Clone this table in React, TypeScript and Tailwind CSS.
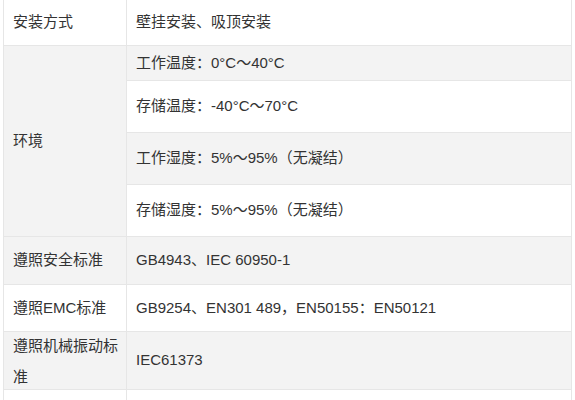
import React from "react";

const font = { fontFamily: '"Liberation Sans", "Noto Sans CJK SC", sans-serif' };

function Row({ label, value, h, bg, labelClass = "" }: { label: React.ReactNode; value: React.ReactNode; h: string; bg: string; labelClass?: string }) {
  return (
    <div className={`flex border-b border-[#e6e6e6] ${h} ${bg}`}>
      <div className={`w-[123px] shrink-0 border-r border-[#e6e6e6] pl-[9px] pr-1 flex items-center ${labelClass}`}>{label}</div>
      <div className="flex-1 pl-[9px] flex items-center">{value}</div>
    </div>
  );
}

export default function App() {
  return (
    <div className="w-[575px] h-[400px] overflow-hidden bg-white" style={font}>
      <div className="ml-[3px] w-[569px] -mt-[1px] border-l border-r border-t border-[#e6e6e6] text-[15px] text-[#333]">
        <Row label="安装方式" value="壁挂安装、吸顶安装" h="h-[46px]" bg="bg-white" />
        <div className="flex border-b border-[#e6e6e6]">
          <div className="w-[123px] shrink-0 border-r border-[#e6e6e6] pl-[9px] flex items-center bg-[#f3f3f3]">环境</div>
          <div className="flex-1 flex flex-col">
            <div className="h-[35px] pl-[9px] flex items-center bg-[#f3f3f3] border-b border-[#e6e6e6]">工作温度：0°C～40°C</div>
            <div className="h-[52px] pl-[9px] flex items-center bg-white border-b border-[#e6e6e6]">存储温度：-40°C～70°C</div>
            <div className="h-[52px] pl-[9px] flex items-center bg-[#f3f3f3] border-b border-[#e6e6e6]">工作湿度：5%～95%（无凝结）</div>
            <div className="h-[51px] pl-[9px] flex items-center bg-white">存储湿度：5%～95%（无凝结）</div>
          </div>
        </div>
        <Row label="遵照安全标准" value="GB4943、IEC 60950-1" h="h-[48px]" bg="bg-[#f3f3f3]" />
        <Row label="遵照EMC标准" value="GB9254、EN301 489，EN50155：EN50121" h="h-[47px]" bg="bg-white" />
        <Row label={<span className="leading-[31px]">遵照机械振动标准</span>} value="IEC61373" h="h-[58px]" bg="bg-[#f3f3f3]" />
        <div className="flex h-[60px] bg-white">
          <div className="w-[123px] shrink-0 border-r border-[#e6e6e6] pl-[9px] pr-1 pt-[6px] leading-[31px]">遵照无线射频标准</div>
          <div className="flex-1 pl-[9px]"></div>
        </div>
      </div>
    </div>
  );
}
